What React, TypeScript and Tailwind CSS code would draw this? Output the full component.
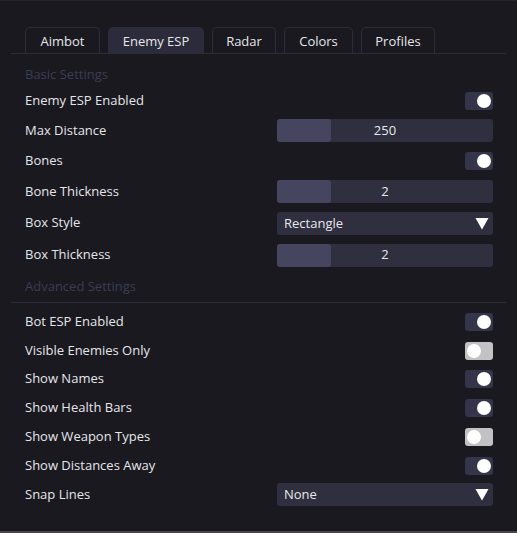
import React from "react";

const font = { fontFamily: '"Open Sans", "Noto Sans", sans-serif' };

function Toggle({ on }: { on: boolean }) {
  return on ? (
    <div className="w-[28px] h-[18px] rounded-[3px] bg-[#34344a] flex items-center justify-end pr-[2px]">
      <div className="w-[14px] h-[14px] rounded-full bg-white" />
    </div>
  ) : (
    <div className="w-[28px] h-[18px] rounded-[3px] bg-[#c2c2c4] flex items-center justify-start pl-[2px]">
      <div className="w-[14px] h-[14px] rounded-full bg-white" />
    </div>
  );
}

function Slider({ value }: { value: string }) {
  return (
    <div className="relative w-[216px] h-[23px] rounded-[3px] bg-[#2f2f3f] flex items-center justify-center">
      <div className="absolute left-0 top-0 h-[23px] w-[54px] rounded-[3px] bg-[#45455f]" />
      <span className="relative text-[13px] text-[#e8e8ec]">{value}</span>
    </div>
  );
}

function Select({ value }: { value: string }) {
  return (
    <div className="w-[216px] h-[23px] rounded-[3px] bg-[#2f2f3f] flex items-center justify-between pl-[7px] pr-[4px]">
      <span className="text-[13px] text-[#e8e8ec] pt-[1px]">{value}</span>
      <svg width="14" height="13" viewBox="0 0 14 13">
        <polygon points="0.5,1 13.5,1 7,12.5" fill="#ffffff" />
      </svg>
    </div>
  );
}

function Row({ label, h, children }: { label: string; h: string; children: React.ReactNode }) {
  return (
    <div className={`flex items-center justify-between ${h}`}>
      <span className="text-[13px] text-[#e6e6ea]">{label}</span>
      {children}
    </div>
  );
}

const tabs = [
  { name: "Aimbot", w: "w-[75px]" },
  { name: "Enemy ESP", w: "w-[96px]" },
  { name: "Radar", w: "w-[64px]" },
  { name: "Colors", w: "w-[69px]" },
  { name: "Profiles", w: "w-[74px]" },
];

export default function App() {
  return (
    <div className="w-[517px] h-[533px] bg-[#19191f] flex flex-col overflow-hidden" style={font}>
      <div className="h-[1px] bg-[#24242e]" />
      <div className="flex-1 flex flex-col">
        <div className="mt-[26px] mx-[11px] border-b border-[#2c2c3a] flex gap-[8px] pl-[14px]">
          {tabs.map((t) => (
            <div
              key={t.name}
              className={`${t.w} h-[26px] pt-[3px] rounded-t-[5px] border border-b-0 border-[#2c2c3a] flex items-center justify-center text-[13px] text-[#e6e6ea] ${
                t.name === "Enemy ESP" ? "bg-[#2b2b3b]" : "bg-[#19191f]"
              }`}
            >
              {t.name}
            </div>
          ))}
        </div>

        <div className="pl-[25px] pr-[24px] pt-[9px] flex flex-col">
          <div className="h-[24px] flex items-center text-[13px] text-[#3c3c54]">Basic Settings</div>
          <Row label="Enemy ESP Enabled" h="h-[28px]">
            <Toggle on />
          </Row>
          <Row label="Max Distance" h="h-[31px]">
            <Slider value="250" />
          </Row>
          <Row label="Bones" h="h-[30px]">
            <Toggle on />
          </Row>
          <Row label="Bone Thickness" h="h-[31px]">
            <Slider value="2" />
          </Row>
          <Row label="Box Style" h="h-[32px]">
            <Select value="Rectangle" />
          </Row>
          <Row label="Box Thickness" h="h-[32px]">
            <Slider value="2" />
          </Row>
          <div className="h-[31px] flex items-center text-[13px] text-[#3c3c54]">Advanced Settings</div>
        </div>

        <div className="mx-[11px] h-[1px] bg-[#2c2c3a]" />

        <div className="pl-[25px] pr-[24px] pt-[4px] flex flex-col">
          <Row label="Bot ESP Enabled" h="h-[29px]">
            <Toggle on />
          </Row>
          <Row label="Visible Enemies Only" h="h-[29px]">
            <Toggle on={false} />
          </Row>
          <Row label="Show Names" h="h-[28px]">
            <Toggle on />
          </Row>
          <Row label="Show Health Bars" h="h-[29px]">
            <Toggle on />
          </Row>
          <Row label="Show Weapon Types" h="h-[29px]">
            <Toggle on={false} />
          </Row>
          <Row label="Show Distances Away" h="h-[29px]">
            <Toggle on />
          </Row>
          <Row label="Snap Lines" h="h-[29px]">
            <Select value="None" />
          </Row>
        </div>
      </div>
      <div className="h-[2px] bg-[#4a464e]" />
    </div>
  );
}
